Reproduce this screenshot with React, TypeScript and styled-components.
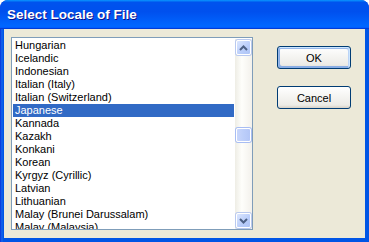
import styled, { createGlobalStyle, css } from "styled-components";

const locales = [
  "Hungarian",
  "Icelandic",
  "Indonesian",
  "Italian (Italy)",
  "Italian (Switzerland)",
  "Japanese",
  "Kannada",
  "Kazakh",
  "Konkani",
  "Korean",
  "Kyrgyz (Cyrillic)",
  "Latvian",
  "Lithuanian",
  "Malay (Brunei Darussalam)",
  "Malay (Malaysia)",
];

const GlobalStyle = createGlobalStyle`
  body {
    margin: 0;
    background: #ffffff;
    font-family: "Liberation Sans", Arial, sans-serif;
  }
`;

const Window = styled.div`
  width: 369px;
  height: 242px;
  display: flex;
  flex-direction: column;
  border-radius: 8px 8px 0 0;
  overflow: hidden;
  background: #0831d9;
`;

const TitleBar = styled.div`
  height: 29px;
  flex: none;
  display: flex;
  align-items: center;
  padding: 0 0 0 7px;
  background: linear-gradient(
    180deg,
    #0997ff 0%,
    #0053ee 8%,
    #0050ee 40%,
    #06f 88%,
    #06f 93%,
    #005bff 95%,
    #003dd7 96%,
    #003dd7 100%
  );
  color: #fff;
  font-family: "Liberation Sans", Arial, sans-serif;
  font-weight: bold;
  font-size: 13.5px;
  text-shadow: 1px 1px #0f1089;
`;

const Frame = styled.div`
  flex: 1;
  display: flex;
  padding: 0 4px 4px 4px;
  background: linear-gradient(90deg, #0831d9, #166aee 2px, #0055e5 3px);
  min-height: 0;
`;

const Client = styled.div`
  flex: 1;
  display: flex;
  gap: 24px;
  padding: 8px 0 0 7px;
  background: #ece9d8;
`;

const ListBox = styled.div`
  width: 239px;
  height: 190px;
  display: flex;
  padding: 1px 0 0 1px;
  border: 1px solid #7f9db9;
  background: #fff;
`;

const Items = styled.div`
  flex: 1;
  overflow: hidden;
`;

const Item = styled.div<{ $selected?: boolean }>`
  height: 13px;
  line-height: 13px;
  padding-left: 2px;
  margin-right: 1px;
  font-family: "Liberation Sans", Arial, sans-serif;
  font-size: 11px;
  white-space: nowrap;
  color: #000;
  ${(p) =>
    p.$selected &&
    css`
      background: #316ac5;
      color: #fff;
    `}
`;

const ScrollBar = styled.div`
  width: 17px;
  display: flex;
  flex-direction: column;
  background: linear-gradient(90deg, #eeede5, #fefefb 40%, #f3f1ec);
`;

const ArrowButton = styled.div`
  width: 15px;
  height: 15px;
  flex: none;
  margin: 1px;
  display: flex;
  align-items: center;
  justify-content: center;
  border-radius: 2px;
  box-sizing: border-box;
  border: 1px solid #fff;
  background: linear-gradient(135deg, #dbe6fe, #b9cdfa 60%, #aec4f6);
  box-shadow: 0 0 0 1px #b9c9ef;
`;

const Track = styled.div`
  flex: 1;
  display: flex;
  flex-direction: column;
`;

const Thumb = styled.div<{ $offset: number }>`
  margin: ${(p) => p.$offset}px 1px 0 1px;
  height: 14px;
  box-sizing: border-box;
  border-radius: 2px;
  border: 1px solid #fff;
  background: linear-gradient(90deg, #c8d6fb, #bccefa 50%, #b3c6f7);
  box-shadow: 0 0 0 1px #a8bdf3;
`;

const Buttons = styled.div`
  display: flex;
  flex-direction: column;
  gap: 17px;
  padding-top: 9px;
`;

const Button = styled.button<{ $default?: boolean }>`
  width: 74px;
  height: 23px;
  padding: 0;
  border: 1px solid #003c74;
  border-radius: 3px;
  background: linear-gradient(180deg, #fff, #ecebe6 86%, #d6d0c5);
  font-family: "Liberation Sans", Arial, sans-serif;
  font-size: 11px;
  color: #000;
  ${(p) =>
    p.$default &&
    css`
      box-shadow: inset -1px 1px #cee7ff, inset 1px 2px #98b8ea,
        inset -2px 2px #bcd4f6, inset 1px -1px #89ade4,
        inset 2px -2px #89ade4;
    `}
`;

const Chevron = ({ up }: { up?: boolean }) => (
  <svg width="9" height="6" viewBox="0 0 9 6">
    <polyline
      points={up ? "1,5 4.5,1.5 8,5" : "1,1 4.5,4.5 8,1"}
      fill="none"
      stroke="#4d6185"
      strokeWidth="2"
    />
  </svg>
);

export default function App() {
  return (
    <>
      <GlobalStyle />
      <Window>
        <TitleBar>Select Locale of File</TitleBar>
        <Frame>
          <Client>
            <ListBox>
              <Items>
                {locales.map((name) => (
                  <Item key={name} $selected={name === "Japanese"}>
                    {name}
                  </Item>
                ))}
              </Items>
              <ScrollBar>
                <ArrowButton>
                  <Chevron up />
                </ArrowButton>
                <Track>
                  <Thumb $offset={72} />
                </Track>
                <ArrowButton>
                  <Chevron />
                </ArrowButton>
              </ScrollBar>
            </ListBox>
            <Buttons>
              <Button $default>OK</Button>
              <Button>Cancel</Button>
            </Buttons>
          </Client>
        </Frame>
      </Window>
    </>
  );
}
